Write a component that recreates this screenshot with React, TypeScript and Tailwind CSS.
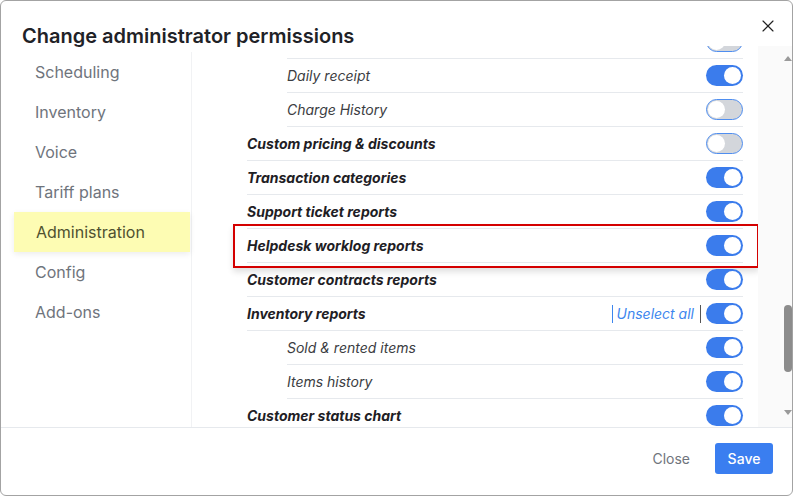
import { X } from 'lucide-react';

type Row = {
  label: string;
  sub?: boolean;
  on: boolean;
  unselect?: boolean;
  flagged?: boolean;
};

// first row is scrolled mostly out of view, only its toggle peeks out
const rows: Row[] = [
  { label: '', sub: true, on: false },
  { label: 'Daily receipt', sub: true, on: true },
  { label: 'Charge History', sub: true, on: false },
  { label: 'Custom pricing & discounts', on: false },
  { label: 'Transaction categories', on: true },
  { label: 'Support ticket reports', on: true },
  { label: 'Helpdesk worklog reports', on: true, flagged: true },
  { label: 'Customer contracts reports', on: true },
  { label: 'Inventory reports', on: true, unselect: true },
  { label: 'Sold & rented items', sub: true, on: true },
  { label: 'Items history', sub: true, on: true },
  { label: 'Customer status chart', on: true },
];

const menu = ['Scheduling', 'Inventory', 'Voice', 'Tariff plans', 'Administration', 'Config', 'Add-ons'];

const Toggle = ({ on }: { on: boolean }) =>
  on ? (
    <div className="w-[37px] h-[21px] rounded-full bg-[#3b7cec] flex items-center justify-end pr-[2px]">
      <div className="w-[17px] h-[17px] rounded-full bg-white" />
    </div>
  ) : (
    <div className="w-[37px] h-[21px] rounded-full bg-[#d3d6db] border border-[#4f8ef0] flex items-center pl-[1px]">
      <div className="w-[17px] h-[17px] rounded-full bg-white" />
    </div>
  );

export default function App() {
  return (
    <div
      className="w-[793px] h-[496px] bg-white overflow-hidden"
      style={{ fontFamily: 'Inter, "Noto Sans", sans-serif' }}
    >
      <div className="w-full h-full border border-[#a3a3a3] rounded-[6px] flex flex-col overflow-hidden">
        {/* Header */}
        <div className="h-[45px] shrink-0 flex items-start justify-between pl-[21px] pr-[14px]">
          <h2 className="mt-[25px] text-[20px] leading-[20px] font-semibold text-[#1f2227]">
            Change administrator permissions
          </h2>
          <X className="mt-[15px] w-[20px] h-[20px] text-[#222]" strokeWidth={1.4} />
        </div>

        {/* Body */}
        <div className="flex h-[381px] shrink-0">
          <div className="w-[191px] flex flex-col pt-[6px]">
            <div className="h-full border-r border-[#f1f2f4] flex flex-col">
              {menu.map((m) =>
                m === 'Administration' ? (
                  <div
                    key={m}
                    className="ml-[13px] w-[176px] h-[40px] bg-[#fdfcb3] shadow-[0_2px_6px_rgba(0,0,0,0.08)] flex items-center pl-[22px] text-[16px] text-[#4f5130]"
                  >
                    {m}
                  </div>
                ) : (
                  <div key={m} className="h-[40px] flex items-center pl-[34px] text-[16px] text-[#6f747c]">
                    {m}
                  </div>
                )
              )}
            </div>
          </div>

          <div className="flex-1 overflow-hidden">
            <div className="-mt-[21px] pl-[55px] pr-[15px]">
              {rows.map((r, i) => (
                <div key={i} className={`relative h-[34px] ${r.sub ? 'pl-[40px]' : ''}`}>
                  <div className="h-full flex items-center justify-between border-b border-[#e6e9ed]">
                    <span
                      className={
                        r.sub
                          ? 'text-[14px] italic text-[#3b3d42]'
                          : 'text-[14px] italic font-bold text-[#1e2024]'
                      }
                    >
                      {r.label}
                    </span>
                    <div className="flex items-center">
                      {r.unselect && (
                        <div className="flex items-center mr-[5px] text-[14px] italic text-[#3d86ee]">
                          <span className="w-px h-[18px] bg-[#3d86ee] mr-[4px]" />
                          Unselect all
                          <span className="w-px h-[18px] bg-[#555] ml-[6px]" />
                        </div>
                      )}
                      <Toggle on={r.on} />
                    </div>
                  </div>
                  {r.flagged && (
                    <div className="absolute -left-[14px] -right-[16px] -top-[5px] -bottom-[5px] border-2 border-[#d40000] shadow-[0_4px_6px_rgba(0,0,0,0.12)]" />
                  )}
                </div>
              ))}
            </div>
          </div>

          {/* Scrollbar */}
          <div className="w-[34px] bg-[#fafafa] flex flex-col items-end">
            <div className="w-[9px] flex flex-col items-center h-full">
              <div className="mt-[10px] w-0 h-0 border-l-[4px] border-r-[4px] border-b-[5px] border-l-transparent border-r-transparent border-b-[#9a9a9a]" />
              <div className="mt-[244px] w-[8px] h-[67px] rounded-full bg-[#8c8c8c]" />
              <div className="mt-[38px] w-0 h-0 border-l-[4px] border-r-[4px] border-t-[5px] border-l-transparent border-r-transparent border-t-[#9a9a9a]" />
            </div>
          </div>
        </div>

        {/* Footer */}
        <div className="flex-1 border-t border-[#e6e9ed] flex items-center justify-end pr-[19px] pb-[6px] gap-[25px]">
          <span className="text-[14px] text-[#6f747c]">Close</span>
          <button className="w-[58px] h-[31px] rounded-[3px] bg-[#3a7ef0] text-white text-[14px] font-medium">
            Save
          </button>
        </div>
      </div>
    </div>
  );
}
